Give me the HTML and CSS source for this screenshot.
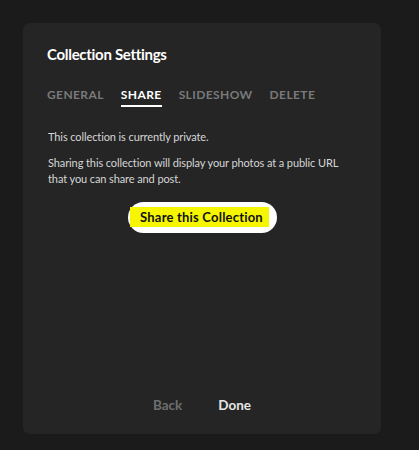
FILE: index.html
```html
<!DOCTYPE html>
<html>
<head>
<meta charset="utf-8">
<link rel="stylesheet" href="styles.css">
</head>
<body>
<div class="dialog">
  <h1 class="title">Collection Settings</h1>
  <nav class="tabs">
    <span class="tab">GENERAL</span>
    <span class="tab active">SHARE</span>
    <span class="tab">SLIDESHOW</span>
    <span class="tab">DELETE</span>
  </nav>
  <div class="body">
    <p class="text">This collection is currently private.</p>
    <p class="text">Sharing this collection will display your photos at a public URL that you can share and post.</p>
    <div class="btn-row">
      <button class="share-btn"><span class="hl">Share this Collection</span></button>
    </div>
  </div>
  <div class="footer">
    <span class="foot-btn back">Back</span>
    <span class="foot-btn done">Done</span>
  </div>
</div>
</body>
</html>
```

FILE: styles.css
```css
html, body {
  margin: 0;
  padding: 0;
}
body {
  width: 419px;
  height: 450px;
  background: #1b1b1b;
  font-family: Lato, "Noto Sans", sans-serif;
  padding: 23px 38px 16px 23px;
  box-sizing: border-box;
}
.dialog {
  background: #252525;
  border-radius: 7px;
  height: 411px;
  box-sizing: border-box;
  padding: 21px 24px 0 24px;
  display: flex;
  flex-direction: column;
}
.title {
  margin: 0;
  color: #ffffff;
  font-size: 15px;
  font-weight: 700;
  letter-spacing: -0.3px;
  line-height: 20px;
}
.tabs {
  display: flex;
  gap: 17px;
  margin-top: 23px;
}
.tab {
  color: #7a7a7a;
  font-size: 12px;
  font-weight: 700;
  letter-spacing: 0.4px;
  line-height: 16px;
  padding-bottom: 2px;
  border-bottom: 2px solid transparent;
}
.tab.active {
  color: #ffffff;
  border-bottom-color: #ffffff;
}
.body {
  padding-top: 22px;
  flex: 1;
}
.text {
  margin: 0 0 10px 1px;
  color: #d6d6d6;
  font-size: 11px;
  line-height: 16px;
  letter-spacing: -0.1px;
}
.btn-row {
  display: flex;
  justify-content: center;
  padding-top: 5px;
}
.share-btn {
  background: #ffffff;
  border: none;
  border-radius: 16px;
  height: 31px;
  width: 149px;
  padding: 0;
  display: flex;
  align-items: center;
  justify-content: center;
  font-family: inherit;
  cursor: pointer;
}
.hl {
  background: #f6f600;
  color: #111111;
  font-size: 13px;
  font-weight: 700;
  letter-spacing: 0.2px;
  padding: 3px 6px 2px 10px;
  line-height: 15px;
  margin-top: -1px;
  margin-left: -5px;
}
.footer {
  display: flex;
  justify-content: center;
  gap: 36px;
  padding-bottom: 21px;
}
.foot-btn {
  font-size: 13.5px;
  font-weight: 700;
  line-height: 16px;
}
.back { color: #6e6e6e; }
.done { color: #e6e6e6; }
```
